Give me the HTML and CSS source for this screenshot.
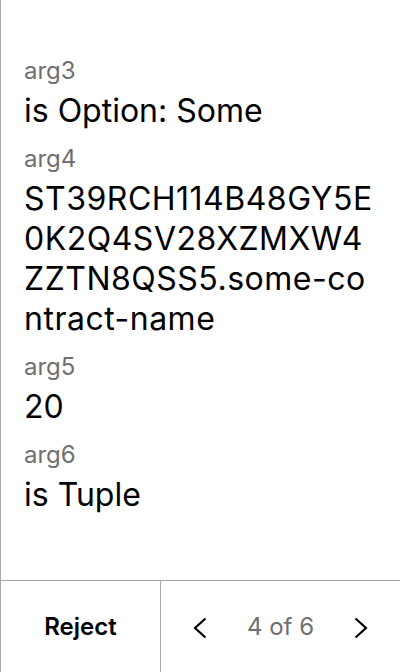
FILE: index.html
```html
<!DOCTYPE html>
<html>
<head>
<meta charset="utf-8">
<link rel="stylesheet" href="styles.css">
</head>
<body>
<div class="screen">
  <div class="content">
    <div class="pair">
      <div class="label">arg3</div>
      <div class="value">is Option: Some</div>
    </div>
    <div class="pair">
      <div class="label">arg4</div>
      <div class="value address">ST39RCH114B48GY5E0K2Q4SV28XZMXW4ZZTN8QSS5.some-contract-name</div>
    </div>
    <div class="pair">
      <div class="label">arg5</div>
      <div class="value">20</div>
    </div>
    <div class="pair">
      <div class="label">arg6</div>
      <div class="value">is Tuple</div>
    </div>
  </div>
  <div class="footer">
    <div class="reject">Reject</div>
    <div class="nav">
      <svg class="chev" width="14" height="22" viewBox="0 0 14 22"><path d="M12.5 1.5 L2 11 L12.5 20.5" fill="none" stroke="#000" stroke-width="2.2"/></svg>
      <span class="page">4 of 6</span>
      <svg class="chev" width="14" height="22" viewBox="0 0 14 22"><path d="M1.5 1.5 L12 11 L1.5 20.5" fill="none" stroke="#000" stroke-width="2.2"/></svg>
    </div>
  </div>
</div>
</body>
</html>
```
FILE: styles.css
```css
html, body {
  margin: 0;
  padding: 0;
  background: #fff;
}
.screen {
  width: 400px;
  height: 672px;
  box-sizing: border-box;
  border-left: 1px solid #a8a8a8;
  display: flex;
  flex-direction: column;
  font-family: Inter, "Noto Sans", sans-serif;
  color: #000;
}
.content {
  flex: 1;
  padding: 55px 23px 0 23px;
  display: flex;
  flex-direction: column;
  gap: 12px;
}
.pair {
  display: flex;
  flex-direction: column;
  gap: 4px;
}
.label {
  font-size: 24px;
  line-height: 32px;
  color: #6f6f6f;
}
.value {
  font-size: 32px;
  line-height: 40px;
  word-break: break-all;
}
.address {
  letter-spacing: 0.5px;
}
.footer {
  height: 92px;
  box-sizing: border-box;
  border-top: 1px solid #a8a8a8;
  display: flex;
}
.reject {
  width: 159px;
  border-right: 1px solid #a8a8a8;
  display: flex;
  align-items: center;
  justify-content: center;
  font-size: 24px;
  font-weight: 600;
}
.nav {
  flex: 1;
  display: flex;
  align-items: center;
  justify-content: space-between;
  padding: 2px 32px 0 32px;
}
.page {
  font-size: 24px;
  color: #6f6f6f;
  margin-top: -2px;
}
```
